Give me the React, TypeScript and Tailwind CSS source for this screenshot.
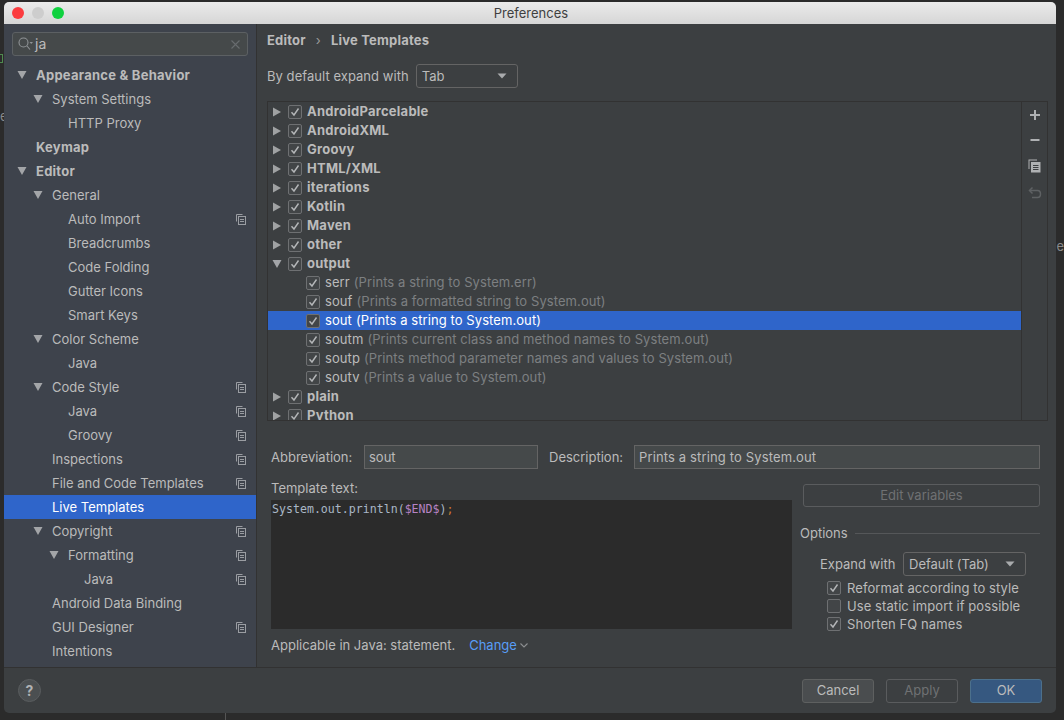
import React from 'react';

const font = { fontFamily: 'Inter, "Noto Sans", sans-serif' };

const navItems = [
  { label: 'Appearance & Behavior', level: 0, open: true, bold: true },
  { label: 'System Settings', level: 1, open: true },
  { label: 'HTTP Proxy', level: 2 },
  { label: 'Keymap', level: 0, bold: true },
  { label: 'Editor', level: 0, open: true, bold: true },
  { label: 'General', level: 1, open: true },
  { label: 'Auto Import', level: 2, copy: true },
  { label: 'Breadcrumbs', level: 2 },
  { label: 'Code Folding', level: 2 },
  { label: 'Gutter Icons', level: 2 },
  { label: 'Smart Keys', level: 2 },
  { label: 'Color Scheme', level: 1, open: true },
  { label: 'Java', level: 2 },
  { label: 'Code Style', level: 1, open: true, copy: true },
  { label: 'Java', level: 2, copy: true },
  { label: 'Groovy', level: 2, copy: true },
  { label: 'Inspections', level: 1, copy: true },
  { label: 'File and Code Templates', level: 1, copy: true },
  { label: 'Live Templates', level: 1, selected: true },
  { label: 'Copyright', level: 1, open: true, copy: true },
  { label: 'Formatting', level: 2, open: true, copy: true },
  { label: 'Java', level: 3, copy: true },
  { label: 'Android Data Binding', level: 1 },
  { label: 'GUI Designer', level: 1, copy: true },
  { label: 'Intentions', level: 1 },
];

const groups = ['AndroidParcelable', 'AndroidXML', 'Groovy', 'HTML/XML', 'iterations', 'Kotlin', 'Maven', 'other', 'output'];

const templates = [
  { name: 'serr', desc: '(Prints a string to System.err)' },
  { name: 'souf', desc: '(Prints a formatted string to System.out)' },
  { name: 'sout', desc: '(Prints a string to System.out)', selected: true },
  { name: 'soutm', desc: '(Prints current class and method names to System.out)' },
  { name: 'soutp', desc: '(Prints method parameter names and values to System.out)' },
  { name: 'soutv', desc: '(Prints a value to System.out)' },
];

const Triangle = ({ open, className }: { open?: boolean; className?: string }) => (
  <svg width="10" height="10" viewBox="0 0 10 10" className={className}>
    {open ? <path d="M0.5 1H9.5L5 9Z" fill="#a3a5a8" /> : <path d="M1 0.5V9.5L9 5Z" fill="#a0a2a3" />}
  </svg>
);

const CopyIcon = () => (
  <svg width="10" height="11" viewBox="0 0 10 11" fill="none" stroke="#9a9da2" strokeWidth="1">
    <path d="M6.5 0.5H0.5V7.5" />
    <rect x="2.5" y="2.5" width="7" height="8" />
    <path d="M4 5.5H8M4 7.5H8" />
  </svg>
);

const Check = ({ checked = true }: { checked?: boolean }) => (
  <span className="flex h-[14px] w-[14px] shrink-0 items-center justify-center rounded-[2px] border border-[#6e7072] bg-[#424547]">
    {checked && (
      <svg width="10" height="10" viewBox="0 0 10 10" fill="none" stroke="#b4b6b8" strokeWidth="1.4">
        <path d="M1.5 5.2L4 8L8.5 1.5" />
      </svg>
    )}
  </span>
);

const Select = ({ value, className }: { value: string; className: string }) => (
  <div className={`flex h-6 items-center justify-between rounded-[3px] border border-[#646464] bg-[#3c3f41] pl-[5px] pr-[10px] text-[#bbbbbb] ${className}`}>
    <span>{value}</span>
    <svg width="10" height="6" viewBox="0 0 10 6"><path d="M0.5 0.5H9.5L5 5.5Z" fill="#a9abad" /></svg>
  </div>
);

const GroupRow = ({ name }: { name: string }) => (
  <div className="flex h-[19px] shrink-0 items-center pl-[4px]">
    <Triangle open={name === 'output'} />
    <span className="ml-[6px]"><Check /></span>
    <span className="ml-[5px] font-bold tracking-[0.25px] text-[#bbbbbb]">{name}</span>
  </div>
);

const App = () => {
  return (
    <div className="relative h-[720px] w-[1064px] overflow-hidden bg-[#2b2b2b] pb-[7px] pl-[4px] pr-[8px] pt-[2px] text-[13px] leading-none" style={font}>
      <div className="absolute bottom-0 left-[225px] h-[7px] w-px bg-[#555555]" />
      <div className="absolute left-0 top-[110px] text-[#8a8a8a]">el</div>
      <div className="absolute right-0 top-[240px] text-[#8a8a8a]">e</div>
      <div className="absolute left-0 top-[54px] h-[9px] w-[3px] border-y border-r border-[#4f8a4f]" />

      <div className="relative flex h-full flex-col overflow-hidden rounded-[5px] bg-[#3c3f41]">
        {/* title bar */}
        <div className="flex h-[22px] shrink-0 items-center bg-gradient-to-b from-[#ebebeb] to-[#d6d6d6] pl-[8px] pr-[4px]">
          <div className="flex gap-2">
            <span className="h-3 w-3 rounded-full bg-[#fb3c3f]" />
            <span className="h-3 w-3 rounded-full bg-[#cdcdcd]" />
            <span className="h-3 w-3 rounded-full bg-[#0fd13f]" />
          </div>
          <div className="flex-1 pr-[54px] text-center text-[#3f3f3f]">Preferences</div>
        </div>

        <div className="flex min-h-0 flex-1">
          {/* sidebar */}
          <div className="flex w-[253px] shrink-0 flex-col border-r border-[#323232] bg-[#3e434c]">
            <div className="mx-[8px] mt-[8px] flex h-[24px] items-center rounded-[3px] border border-[#5c6063] bg-[#45494a] pl-[5px] pr-[7px]">
              <svg width="15" height="14" viewBox="0 0 15 14" fill="none" stroke="#8f9396" strokeWidth="1.1">
                <circle cx="5.5" cy="5.5" r="4.5" />
                <path d="M9 9L12 12.5" />
                <path d="M11.5 5H15L13.2 7Z" fill="#8f9396" stroke="none" />
              </svg>
              <span className="ml-[2px] flex-1 text-[14px] text-[#bbbbbb]">ja</span>
              <svg width="9" height="9" viewBox="0 0 9 9" stroke="#676b6e" strokeWidth="1.1"><path d="M0.5 0.5L8.5 8.5M8.5 0.5L0.5 8.5" /></svg>
            </div>
            <div className="mt-[7px] flex flex-col">
              {navItems.map((item, i) => (
                <div key={i} className={`flex h-6 items-center pr-[10px] ${item.selected ? 'bg-[#2f65ca] text-white' : 'text-[#bbbbbb]'}`}>
                  <span className="flex justify-end" style={{ width: 32 + item.level * 16 }}>
                    {item.open && <Triangle open className="mr-[9px]" />}
                  </span>
                  <span className={`flex-1 ${item.bold ? 'font-bold tracking-[0.25px]' : ''}`}>{item.label}</span>
                  {item.copy && <CopyIcon />}
                </div>
              ))}
            </div>
          </div>

          {/* content */}
          <div className="flex min-w-0 flex-1 flex-col pl-[10px] pr-[8px]">
            <div className="flex h-[26px] shrink-0 items-end pb-[3px] font-bold tracking-[0.2px] text-[#bbbbbb]">
              <span>Editor</span>
              <span className="mx-[10px] font-normal text-[#9a9a9a]">›</span>
              <span>Live Templates</span>
            </div>
            <div className="mt-[14px] flex items-center">
              <span className="tracking-[0.05px] text-[#bbbbbb]">By default expand with</span>
              <Select value="Tab" className="ml-[7px] w-[102px]" />
            </div>

            <div className="mt-[13px] flex h-[320px] shrink-0 border border-[#323232]">
              <div className="flex min-w-0 flex-1 flex-col overflow-hidden">
                {groups.map((g) => <GroupRow key={g} name={g} />)}
                {templates.map((t) => (
                  <div key={t.name} className={`flex h-[19px] shrink-0 items-center pl-[38px] tracking-[0.08px] ${t.selected ? 'bg-[#2f65ca]' : ''}`}>
                    <Check />
                    <span className={`ml-[5px] ${t.selected ? 'text-white' : 'text-[#bbbbbb]'}`}>{t.name}</span>
                    <span className={`ml-[4px] ${t.selected ? 'text-white' : 'text-[#7d7f81]'}`}>{t.desc}</span>
                  </div>
                ))}
                <GroupRow name="plain" />
                <GroupRow name="Python" />
              </div>
              <div className="flex w-[26px] shrink-0 flex-col items-center gap-[12px] border-l border-[#323232] pt-[7px]">
                <svg width="12" height="12" viewBox="0 0 12 12" fill="#afb1b3"><path d="M5 1H7V5H11V7H7V11H5V7H1V5H5Z" /></svg>
                <svg width="12" height="14" viewBox="0 0 12 14" fill="#afb1b3"><path d="M1.5 6H10.5V8H1.5Z" /></svg>
                <svg width="13" height="14" viewBox="0 0 13 14" fill="#afb1b3"><path d="M0.5 0.5H9V1.5H1.5V10H0.5Z" /><path fillRule="evenodd" d="M3 3H12.5V13.5H3ZM5 6V7H10.5V6ZM5 8V9H10.5V8ZM5 10V11H10.5V10Z" /></svg>
                <svg width="14" height="14" viewBox="0 0 14 14" fill="none" stroke="#5e6163" strokeWidth="1.5" className="mt-[1px]"><path d="M4.5 1.5L1.5 4.5L4.5 7.5" /><path d="M2 4.5H9.5C11.5 4.5 12.5 6 12.5 8C12.5 10 11.5 11.5 9.5 11.5H4" /></svg>
              </div>
            </div>

            <div className="mt-[24px] flex items-center pl-[4px] pr-[8px] text-[#bbbbbb]">
              <span className="w-[93px]">Abbreviation:</span>
              <div className="flex h-6 w-[174px] items-center border border-[#646464] bg-[#45494a] px-[4px]">sout</div>
              <span className="ml-[11px] w-[85px]">Description:</span>
              <div className="flex h-6 flex-1 items-center border border-[#646464] bg-[#45494a] px-[4px] tracking-[0.14px]">Prints a string to System.out</div>
            </div>

            <div className="mt-[13px] flex min-h-0 pl-[4px] pr-[8px]">
              <div className="flex w-[521px] shrink-0 flex-col">
                <div className="h-[18px] text-[#bbbbbb]">Template text:</div>
                <div className="h-[129px] bg-[#2b2b2b] pl-[1px] pt-[2px] text-[11.6px] leading-[14px] text-[#a9b7c6]" style={{ fontFamily: '"DejaVu Sans Mono", monospace' }}>
                  System.out.println(<span className="text-[#b783c4]">$END$</span>)<span className="text-[#cc7832]">;</span>
                </div>
              </div>
              <div className="ml-[8px] mt-[2px] flex flex-1 flex-col text-[#bbbbbb]">
                <div className="ml-[3px] flex h-[23px] items-center justify-center rounded-[3px] border border-[#5a5c5e] text-[#6f7173]">Edit variables</div>
                <div className="mt-[20px] flex items-center">
                  <span>Options</span>
                  <span className="ml-[7px] h-px flex-1 bg-[#555759]" />
                </div>
                <div className="ml-[20px] mt-[12px] flex items-center">
                  <span className="w-[83px]">Expand with</span>
                  <Select value="Default (Tab)" className="w-[123px]" />
                </div>
                <div className="ml-[27px] mt-[3px] flex flex-col tracking-[0.08px]">
                  <div className="flex h-[18px] items-center gap-[6px]"><Check /><span>Reformat according to style</span></div>
                  <div className="flex h-[18px] items-center gap-[6px]"><Check checked={false} /><span>Use static import if possible</span></div>
                  <div className="flex h-[18px] items-center gap-[6px]"><Check /><span>Shorten FQ names</span></div>
                </div>
              </div>
            </div>

            <div className="mt-[6px] flex items-center pl-[4px] text-[#bbbbbb]">
              <span>Applicable in Java: statement.</span>
              <span className="ml-[14px] text-[#589df6]">Change</span>
              <svg width="8" height="5" viewBox="0 0 8 5" fill="none" stroke="#8d8f91" strokeWidth="1.1" className="ml-[3px]"><path d="M0.5 0.5L4 4L7.5 0.5" /></svg>
            </div>
          </div>
        </div>

        {/* footer */}
        <div className="flex h-[46px] shrink-0 items-center border-t border-[#323232] pl-[14px] pr-[14px]">
          <div className="flex h-[23px] w-[23px] items-center justify-center rounded-full border border-[#5a5d5f] bg-[#4b4f51] text-[14px] font-bold text-[#b0b2b4]">?</div>
          <div className="ml-auto flex gap-3">
            <div className="flex h-6 w-[72px] items-center justify-center rounded-[3px] border border-[#5e6060] bg-[#4a4d4f] text-[#bbbbbb]">Cancel</div>
            <div className="flex h-6 w-[72px] items-center justify-center rounded-[3px] border border-[#5a5c5e] text-[#6f7173]">Apply</div>
            <div className="flex h-6 w-[72px] items-center justify-center rounded-[3px] border border-[#4c708c] bg-[#365880] text-[#bbbbbb]">OK</div>
          </div>
        </div>
      </div>
    </div>
  );
};

export default App;
